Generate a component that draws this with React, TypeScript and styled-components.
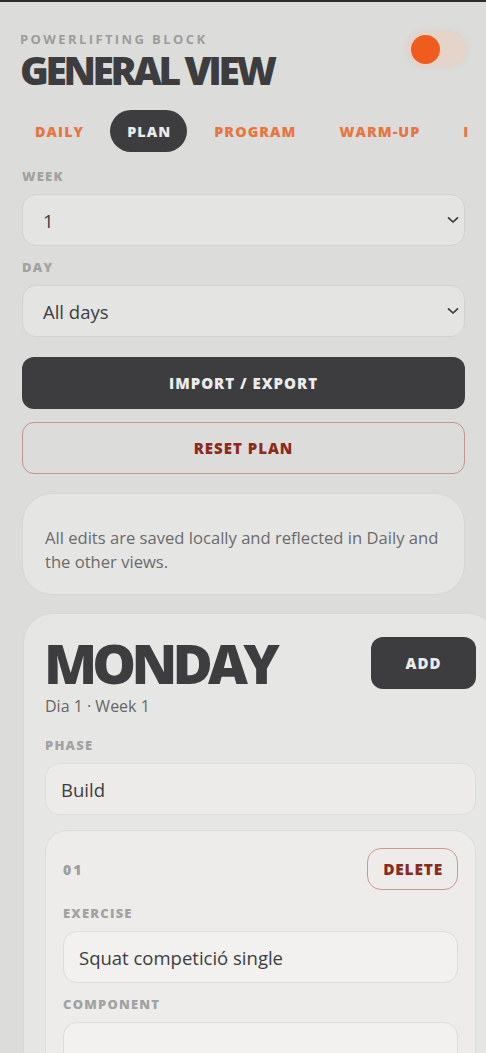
import React, { useState } from 'react';
import styled, { createGlobalStyle } from 'styled-components';

const GlobalStyle = createGlobalStyle`
  html, body {
    margin: 0;
    padding: 0;
    background: #dcdcda;
    overflow-x: hidden;
  }
  body {
    font-family: "Open Sans", "Noto Sans", sans-serif;
    color: #3d3d3f;
    border-top: 2px solid #2e2e2e;
  }
  * { box-sizing: border-box; }
`;

const TABS = ['Daily', 'Plan', 'Program', 'Warm-up', 'Insights'];

const Chevron = () => (
  <ChevronIcon width="12" height="8" viewBox="0 0 12 8" fill="none">
    <path d="M1.5 1.8 L6 6 L10.5 1.8" stroke="#3a3a3a" strokeWidth="1.7" strokeLinecap="round" strokeLinejoin="round" />
  </ChevronIcon>
);

const App: React.FC = () => {
  const [dark, setDark] = useState(false);
  const [tab, setTab] = useState('Plan');

  return (
    <Page>
      <GlobalStyle />
      <Header>
        <div>
          <Eyebrow>Powerlifting block</Eyebrow>
          <Title>General view</Title>
        </div>
        <Toggle onClick={() => setDark(!dark)} aria-label="Toggle theme">
          <Knob />
        </Toggle>
      </Header>

      <Tabs>
        {TABS.map(t => (
          <Tab key={t} $active={t === tab} onClick={() => setTab(t)}>{t}</Tab>
        ))}
      </Tabs>

      <Field $gap={16}>
        <Label>Week</Label>
        <SelectWrap>
          <Select defaultValue="1">
            <option value="1">1</option>
            <option value="2">2</option>
            <option value="3">3</option>
          </Select>
          <Chevron />
        </SelectWrap>
      </Field>

      <Field>
        <Label>Day</Label>
        <SelectWrap>
          <Select defaultValue="all">
            <option value="all">All days</option>
            <option value="mon">Monday</option>
          </Select>
          <Chevron />
        </SelectWrap>
      </Field>

      <Actions>
        <DarkButton>Import / Export</DarkButton>
        <OutlineButton>Reset plan</OutlineButton>
      </Actions>

      <InfoCard>
        All edits are saved locally and reflected in Daily and the other views.
      </InfoCard>

      <DayCard>
        <DayHead>
          <div>
            <DayTitle>Monday</DayTitle>
            <DayMeta>Dia 1 · Week 1</DayMeta>
          </div>
          <AddButton>Add</AddButton>
        </DayHead>

        <Field $gap={20}>
          <Label>Phase</Label>
          <TextInput defaultValue="Build" />
        </Field>

        <ExerciseCard>
          <ExerciseHead>
            <ExerciseNo>01</ExerciseNo>
            <DeleteButton>Delete</DeleteButton>
          </ExerciseHead>
          <Field $gap={15}>
            <Label>Exercise</Label>
            <TextInput $light defaultValue="Squat competició single" />
          </Field>
          <Field>
            <Label>Component</Label>
            <TextInput $light defaultValue="" />
          </Field>
        </ExerciseCard>
      </DayCard>
    </Page>
  );
};

const Page = styled.div`
  padding: 29px 21px 40px 22px;
  display: flex;
  flex-direction: column;
`;

const Header = styled.header`
  display: flex;
  justify-content: space-between;
  align-items: flex-start;
  margin-left: -2px;
`;

const Eyebrow = styled.div`
  font-size: 13px;
  line-height: 16px;
  font-weight: 700;
  letter-spacing: 2.4px;
  text-transform: uppercase;
  color: #9c9c9c;
`;

const Title = styled.h1`
  margin: 0;
  font-size: 39px;
  line-height: 46px;
  font-weight: 800;
  letter-spacing: -3.4px;
  text-transform: uppercase;
  color: #3d3d3f;
`;

const Toggle = styled.button`
  width: 58px;
  height: 34px;
  margin-top: 1px;
  margin-right: -1px;
  border: none;
  border-radius: 17px;
  background: #e5d4ca;
  padding: 3px;
  display: flex;
  align-items: center;
  cursor: pointer;
  box-shadow: 0 0 6px rgba(240, 90, 30, 0.12);
`;

const Knob = styled.span`
  width: 29px;
  height: 29px;
  border-radius: 50%;
  background: #f05c1e;
`;

const Tabs = styled.nav`
  display: flex;
  gap: 10px;
  margin: 17px 0 0 -4px;
  width: 450px;
  overflow: hidden;
`;

const Tab = styled.button<{ $active?: boolean }>`
  flex: none;
  height: 42px;
  padding: 0 16px 0 17px;
  border: none;
  border-radius: 21px;
  background: ${p => (p.$active ? '#3d3d3f' : 'transparent')};
  color: ${p => (p.$active ? '#ececec' : '#e8743f')};
  font-family: inherit;
  font-size: 14.3px;
  font-weight: 800;
  letter-spacing: 1.1px;
  text-transform: uppercase;
  cursor: pointer;
`;

const Field = styled.div<{ $gap?: number }>`
  display: flex;
  flex-direction: column;
  margin-top: ${p => p.$gap ?? 13}px;
`;

const Label = styled.label`
  font-size: 13px;
  line-height: 16px;
  font-weight: 800;
  letter-spacing: 1.2px;
  text-transform: uppercase;
  color: #a2a2a2;
  margin-bottom: 10px;
`;

const SelectWrap = styled.div`
  position: relative;
`;

const Select = styled.select`
  width: 100%;
  height: 52px;
  appearance: none;
  border: 1px solid #d2d2d0;
  border-radius: 14px;
  background: #e4e4e3;
  padding: 0 20px;
  font-family: inherit;
  font-size: 18.5px;
  color: #3d3d3f;
  outline: none;
`;

const ChevronIcon = styled.svg`
  position: absolute;
  right: 6px;
  top: 22px;
  pointer-events: none;
`;

const Actions = styled.div`
  display: flex;
  flex-direction: column;
  gap: 13px;
  margin-top: 20px;
`;

const DarkButton = styled.button`
  height: 52px;
  border: none;
  border-radius: 12px;
  background: #3d3d3f;
  color: #ececec;
  font-family: inherit;
  font-size: 15px;
  font-weight: 800;
  letter-spacing: 1px;
  text-transform: uppercase;
  cursor: pointer;
`;

const OutlineButton = styled(DarkButton)`
  background: transparent;
  border: 1px solid #c3958e;
  color: #8c2a1e;
`;

const InfoCard = styled.div`
  margin-top: 19px;
  padding: 32px 18px 20px 22px;
  border: 1px solid #d6d6d4;
  border-radius: 30px;
  background: #e5e5e4;
  font-size: 16.6px;
  line-height: 24px;
  color: #6b6b6b;
`;

const DayCard = styled.section`
  width: 475px;
  margin: 18px 0 0 1px;
  padding: 23px 21px 0;
  border: 1px solid #d8d8d6;
  border-radius: 30px;
  background: #e6e6e5;
`;

const DayHead = styled.div`
  display: flex;
  justify-content: space-between;
  align-items: flex-start;
`;

const DayTitle = styled.h2`
  margin: 0 0 0 -1px;
  font-size: 55px;
  line-height: 52px;
  font-weight: 800;
  letter-spacing: -4.8px;
  text-transform: uppercase;
  color: #3d3d3f;
`;

const DayMeta = styled.div`
  margin-top: 6px;
  font-size: 16px;
  line-height: 22px;
  color: #666;
`;

const AddButton = styled(DarkButton)`
  width: 105px;
  flex: none;
`;

const TextInput = styled.input<{ $light?: boolean }>`
  height: 52px;
  width: 100%;
  border: 1px solid #dcdcda;
  border-radius: 14px;
  background: ${p => (p.$light ? '#f2f1ef' : '#ecebe9')};
  padding: 0 15px;
  font-family: inherit;
  font-size: 18.5px;
  color: #3d3d3f;
  outline: none;
`;

const ExerciseCard = styled.div`
  margin-top: 15px;
  padding: 17px 17px 20px;
  border: 1px solid #dcdcda;
  border-radius: 22px;
  background: #edecea;
`;

const ExerciseHead = styled.div`
  display: flex;
  justify-content: space-between;
  align-items: center;
`;

const ExerciseNo = styled.span`
  font-size: 14px;
  font-weight: 800;
  letter-spacing: 2px;
  color: #9e9e9e;
`;

const DeleteButton = styled.button`
  height: 42px;
  padding: 0 14px 0 15px;
  border: 1px solid #c89a92;
  border-radius: 14px;
  background: transparent;
  color: #8c2a1e;
  font-family: inherit;
  font-size: 15.5px;
  font-weight: 800;
  letter-spacing: 0.8px;
  text-transform: uppercase;
  cursor: pointer;
`;

export default App;
